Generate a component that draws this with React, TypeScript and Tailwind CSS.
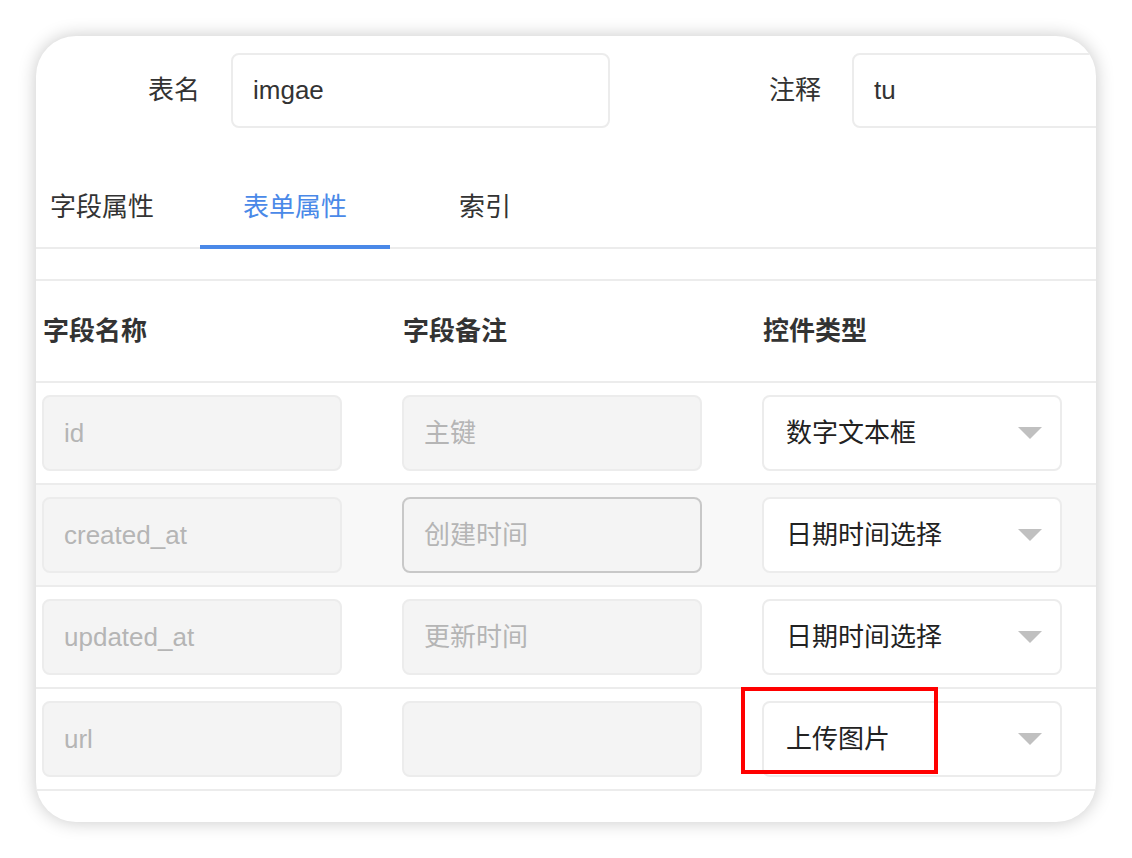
export default function App() {
  const rows = [
    { n: "id", c: "主键", t: "数字文本框" },
    { n: "created_at", c: "创建时间", t: "日期时间选择", hl: true },
    { n: "updated_at", c: "更新时间", t: "日期时间选择" },
    { n: "url", c: "", t: "上传图片", red: true },
  ];
  const Arrow = () => (
    <svg width="24" height="12" viewBox="0 0 24 12" className="shrink-0"><path d="M0 0h24L12 12z" fill="#c0c0c0" /></svg>
  );
  return (
    <div className="w-[1132px] h-[858px] bg-white pt-[36px] pl-[36px] overflow-hidden" style={{ fontFamily: '"Liberation Sans","Noto Sans CJK SC",sans-serif' }}>
      <div className="w-[1060px] h-[786px] bg-white rounded-[40px] shadow-[0_0_18px_rgba(0,0,0,0.22)] overflow-hidden text-[26px] text-[#333]">
        <div className="flex items-center h-[75px] mt-[17px]">
          <div className="w-[195px] text-right pr-[31px] shrink-0">表名</div>
          <div className="w-[379px] h-[75px] border-2 border-[#ececec] rounded-[8px] flex items-center px-[20px] shrink-0">imgae</div>
          <div className="w-[242px] text-right pr-[31px] shrink-0">注释</div>
          <div className="w-[400px] h-[75px] border-2 border-[#ececec] rounded-[8px] flex items-center px-[20px] shrink-0">tu</div>
        </div>
        <div className="flex h-[121px] items-end border-b-2 border-[#ececec]">
          <div className="w-[164px] h-[80px] flex items-center pl-[14px]">字段属性</div>
          <div className="w-[190px] h-[80px] flex items-center justify-center text-[#4a89e8] border-b-4 border-[#4a89e8] -mb-[2px]">表单属性</div>
          <div className="w-[190px] h-[80px] flex items-center justify-center">索引</div>
        </div>
        <div className="h-[32px] border-b-2 border-[#ececec]" />
        <div className="flex h-[102px] items-center border-b-2 border-[#ececec] font-bold">
          <div className="w-[360px] pl-[7px]">字段名称</div>
          <div className="w-[360px] pl-[7px]">字段备注</div>
          <div className="pl-[7px]">控件类型</div>
        </div>
        {rows.map((r) => (
          <div key={r.n} className={`flex items-center h-[102px] border-b-2 border-[#ececec] pl-[6px] ${r.hl ? "bg-[#f8f8f8]" : ""}`}>
            <div className="w-[300px] h-[76px] bg-[#f4f4f4] border-2 border-[#ececec] rounded-[8px] flex items-center px-[20px] text-[#b5b5b5] shrink-0">{r.n}</div>
            <div className={`ml-[60px] w-[300px] h-[76px] bg-[#f4f4f4] border-2 ${r.hl ? "border-[#c8c8c8]" : "border-[#ececec]"} rounded-[8px] flex items-center px-[20px] text-[#b5b5b5] shrink-0`}>{r.c}</div>
            <div className="ml-[60px] relative w-[300px] h-[76px] bg-white border-2 border-[#ececec] rounded-[8px] flex items-center justify-between pl-[22px] pr-[18px] text-[#222] shrink-0">
              {r.t}
              <Arrow />
              {r.red && <div className="absolute left-[-23px] top-[-16px] w-[197px] h-[87px] border-[4px] border-[#ff0000]" />}
            </div>
          </div>
        ))}
      </div>
    </div>
  );
}
